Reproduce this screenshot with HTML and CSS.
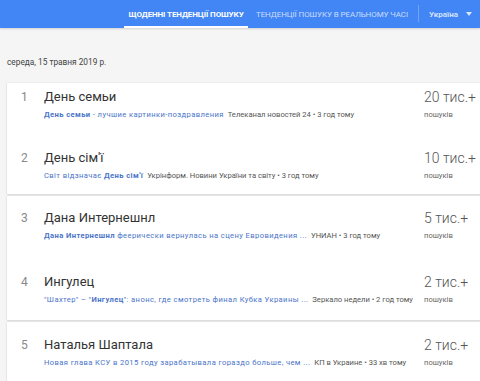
FILE: index.html
```html
<!DOCTYPE html>
<html lang="uk">
<head>
<meta charset="utf-8">
<link rel="stylesheet" href="styles.css">
</head>
<body>
<header class="topbar">
  <nav class="tabs">
    <div class="tab tab-active">ЩОДЕННІ ТЕНДЕНЦІЇ ПОШУКУ</div>
    <div class="tab">ТЕНДЕНЦІЇ ПОШУКУ В РЕАЛЬНОМУ ЧАСІ</div>
  </nav>
  <div class="divider"></div>
  <div class="geo">Україна <span class="caret"></span></div>
</header>
<main class="content">
  <div class="date">середа, 15 травня 2019 р.</div>

  <section class="card">
    <div class="item item-1">
      <div class="num">1</div>
      <div class="body">
        <div class="title">День семьи</div>
        <div class="sub"><span class="link"><b>День семьи</b> - лучшие картинки-поздравления</span> <span class="src">Телеканал новостей 24 • 3 год тому</span></div>
      </div>
      <div class="count"><div class="big">20 тис.+</div><div class="small">пошуків</div></div>
    </div>
    <div class="item item-2">
      <div class="num">2</div>
      <div class="body">
        <div class="title">День сім'ї</div>
        <div class="sub"><span class="link">Світ відзначає <b>День сім'ї</b></span> <span class="src">Укрінформ. Новини України та світу • 3 год тому</span></div>
      </div>
      <div class="count"><div class="big">10 тис.+</div><div class="small">пошуків</div></div>
    </div>
  </section>

  <section class="card">
    <div class="item item-3">
      <div class="num">3</div>
      <div class="body">
        <div class="title">Дана Интернешнл</div>
        <div class="sub"><span class="link"><b>Дана Интернешнл</b> феерически вернулась на сцену Евровидения ...</span> <span class="src">УНИАН • 3 год тому</span></div>
      </div>
      <div class="count"><div class="big">5 тис.+</div><div class="small">пошуків</div></div>
    </div>
    <div class="item item-4">
      <div class="num">4</div>
      <div class="body">
        <div class="title">Ингулец</div>
        <div class="sub"><span class="link">"Шахтер" – "<b>Ингулец</b>": анонс, где смотреть финал Кубка Украины ...</span> <span class="src">Зеркало недели • 2 год тому</span></div>
      </div>
      <div class="count"><div class="big">2 тис.+</div><div class="small">пошуків</div></div>
    </div>
  </section>

  <section class="card">
    <div class="item item-5">
      <div class="num">5</div>
      <div class="body">
        <div class="title">Наталья Шаптала</div>
        <div class="sub"><span class="link">Новая глава КСУ в 2015 году зарабатывала гораздо больше, чем ...</span> <span class="src">КП в Украине • 33 хв тому</span></div>
      </div>
      <div class="count"><div class="big">2 тис.+</div><div class="small">пошуків</div></div>
    </div>
  </section>
</main>
</body>
</html>
```

FILE: styles.css
```css
* { box-sizing: border-box; }
html, body { margin: 0; padding: 0; }
body {
  width: 480px;
  height: 381px;
  overflow: hidden;
  background: #f5f5f5;
  font-family: Roboto, "Liberation Sans", Arial, sans-serif;
  color: #333;
}
.topbar {
  height: 28px;
  background: #4285f4;
  display: flex;
  align-items: stretch;
  box-shadow: 0 1px 2px rgba(0,0,0,0.15);
}
.tabs {
  display: flex;
  margin-left: 124px;
}
.tab {
  font-size: 8px;
  color: rgba(255,255,255,0.72);
  letter-spacing: -0.1px;
  white-space: nowrap;
  display: flex;
  align-items: center;
  padding: 0 6px 0 8px;
}
.tab-active {
  color: #fff;
  font-weight: 700;
  width: 124px;
  padding: 2px 0 0 0;
  justify-content: center;
  border-bottom: 2px solid #fff;
}
.divider {
  width: 1px;
  background: rgba(255,255,255,0.25);
  margin: 5px 0 6px 4px;
}
.geo {
  margin-left: 10px;
  font-size: 8px;
  font-weight: 700;
  color: rgba(255,255,255,0.78);
  display: flex;
  align-items: center;
  white-space: nowrap;
}
.caret {
  display: inline-block;
  margin-left: 8px;
  width: 0;
  height: 0;
  border-left: 3px solid transparent;
  border-right: 3px solid transparent;
  border-top: 4px solid rgba(255,255,255,0.8);
}
.content {
  padding: 27px 0 0 7px;
}
.date {
  font-size: 8.3px;
  color: #444;
  height: 14px;
  line-height: 14px;
}
.card {
  width: 480px;
  background: #fff;
  box-shadow: 0 0 1px rgba(0,0,0,0.18), 0 1px 2px rgba(0,0,0,0.1);
  margin-bottom: 2px;
}
.content .date + .card { margin-top: 14px; }
.item {
  display: flex;
  align-items: flex-start;
  height: 62px;
}
.item-1 { padding-top: 6px; height: 61px; }
.item-2 { padding-top: 6px; height: 50px; }
.item-3 { padding-top: 14px; }
.item-4 { padding-top: 16px; }
.item-5 { padding-top: 15px; }
.num {
  width: 37px;
  padding-left: 14px;
  font-size: 12px;
  line-height: 16px;
  color: #888;
}
.body {
  width: 380px;
  flex: none;
}
.title {
  font-size: 13px;
  line-height: 16px;
  color: #333;
}
.sub {
  margin-top: 5px;
  font-size: 7.6px;
  line-height: 10px;
  white-space: nowrap;
}
.link { color: #4a74c9; letter-spacing: 0.4px; }
.link b { font-weight: 700; }
.src { color: #555; margin-left: 2px; }
.big {
  font-size: 14px;
  line-height: 16px;
  font-weight: 300;
  color: #555;
  white-space: nowrap;
}
.small {
  margin-top: 5px;
  font-size: 7.6px;
  line-height: 10px;
  color: #666;
}
```
